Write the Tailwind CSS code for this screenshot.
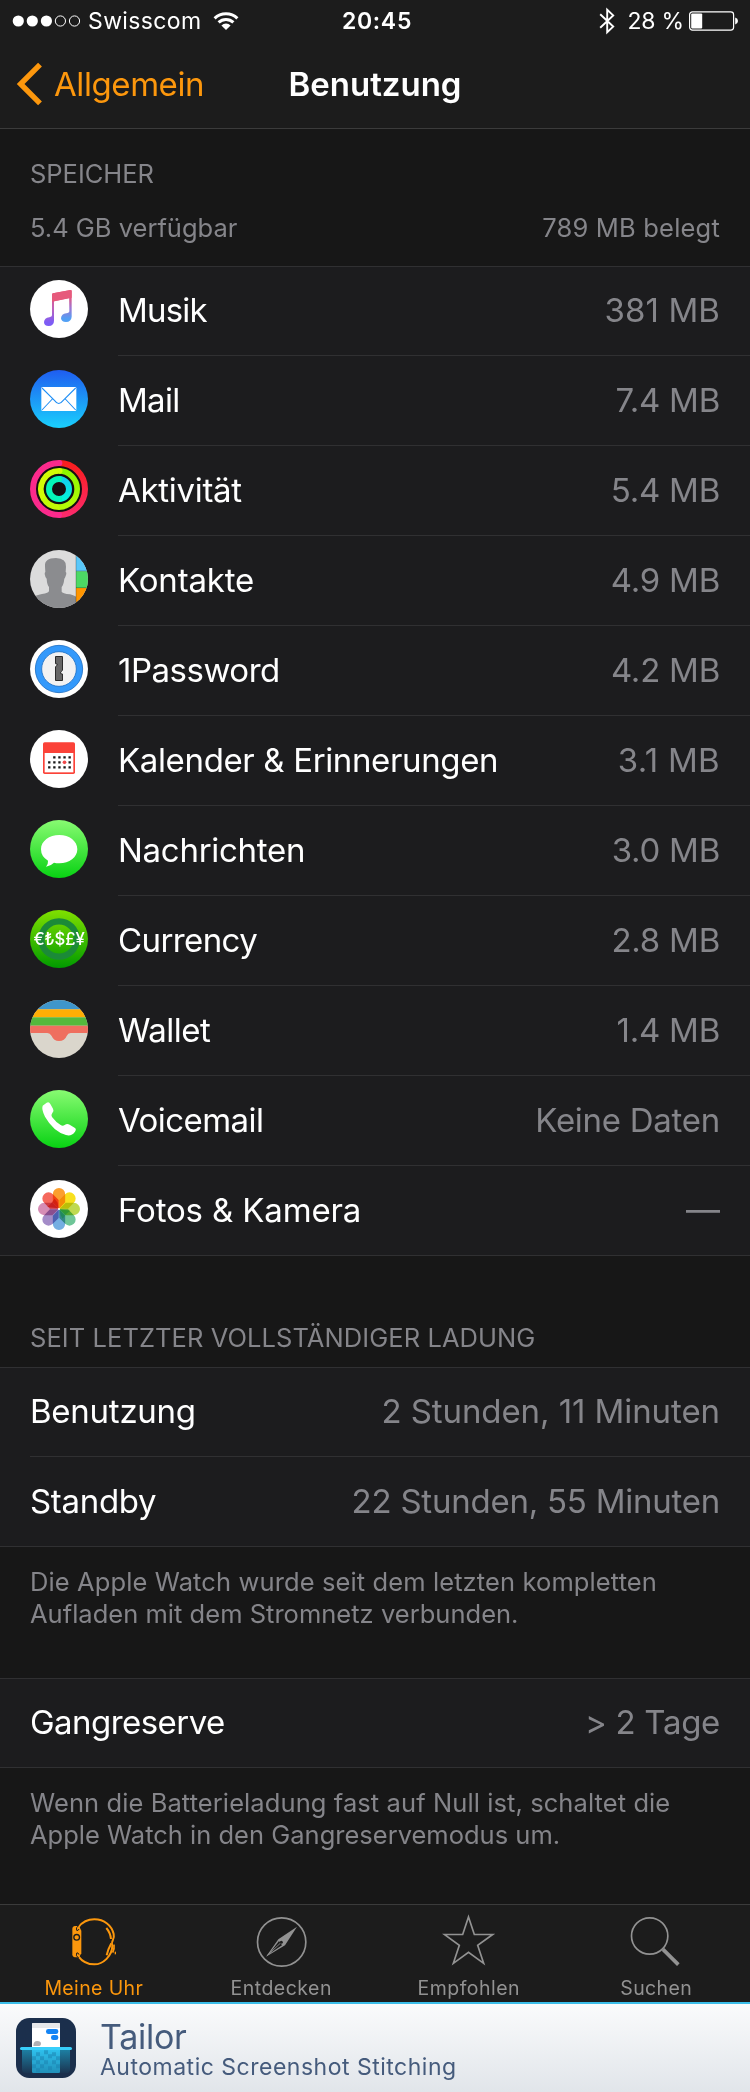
<!DOCTYPE html>
<html lang="de">
<head>
  <meta charset="UTF-8" />
  <meta name="viewport" content="width=device-width, initial-scale=1.0"/>
  <title>Benutzung</title>
  <script src="https://cdn.jsdelivr.net/npm/@tailwindcss/browser@4"></script>
</head>
<body class="w-[750px] h-[2092px] overflow-hidden bg-[#171717] text-white font-['Inter','Liberation_Sans',sans-serif] whitespace-nowrap">

  <!-- Header -->
  <header class="h-[129px] bg-[#1c1c1c] border-b border-[#3b3b3b]">
    <!-- Status bar -->
    <div class="grid grid-cols-[1fr_auto_1fr] h-[41px] items-center text-[23px] leading-[41px]">
      <div class="flex items-center pl-[12px]">
        <svg class="w-[70px] h-[14px]" viewBox="0 0 70 14">
          <g fill="#fff">
            <circle cx="6.3" cy="7" r="5.6"/><circle cx="20.3" cy="7" r="5.6"/><circle cx="34.4" cy="7" r="5.6"/>
          </g>
          <g fill="none" stroke="#fff" stroke-width="1">
            <circle cx="48.4" cy="7" r="5.1"/><circle cx="62.5" cy="7" r="5.1"/>
          </g>
        </svg>
        <span class="ml-[6px] pt-px tracking-[0.38px]">Swisscom</span>
        <svg class="ml-[11px] w-[26px] h-[20px]" viewBox="0 0 26 20">
          <g fill="none" stroke="#fff" stroke-width="3">
            <path d="M1.6 7.4A16.3 16.3 0 0 1 24.4 7.4"/>
            <path d="M5.6 11.4A10.6 10.6 0 0 1 20.4 11.4"/>
          </g>
          <path fill="#fff" d="M13 19L8.4 14.4A6.5 6.5 0 0 1 17.6 14.4Z"/>
        </svg>
      </div>
      <span class="font-semibold tracking-[0.71px] pl-[4px] pt-px">20:45</span>
      <div class="flex items-center justify-end pr-[11px]">
        <svg class="w-[17px] h-[28px]" viewBox="0 0 17 28">
          <path fill="none" stroke="#fff" stroke-width="1.9" d="M1.2 7.2L14.2 19.6L8.2 25.2V2.8L14.2 8.4L1.2 20.8"/>
        </svg>
        <span class="ml-[11px] pt-px tracking-[-0.2px]">28 %</span>
        <svg class="ml-[5px] w-[50px] h-[20px]" viewBox="0 0 50 20">
          <rect x="0.6" y="0.9" width="44" height="18.2" rx="2.8" fill="none" stroke="#fff" stroke-width="1.2"/>
          <rect x="2.2" y="2.6" width="11" height="14.8" rx="1" fill="#fff"/>
          <path fill="#fff" d="M46.2 6.6Q49 7.4 49 10Q49 12.6 46.2 13.4Z"/>
        </svg>
      </div>
    </div>
    <!-- Navigation bar -->
    <div class="grid grid-cols-[1fr_auto_1fr] items-center text-[33px] leading-[86px]">
      <a class="flex items-center pl-[16px] text-[#fc970d]">
        <svg class="w-[27px] h-[44px]" viewBox="0 0 27 44">
          <path fill="none" stroke="currentColor" stroke-width="5.4" d="M24 2.6L4.6 22L24 41.4"/>
        </svg>
        <span class="ml-[11px] tracking-[-0.42px]">Allgemein</span>
      </a>
      <h1 class="font-semibold">Benutzung</h1>
    </div>
  </header>

  <!-- Storage summary -->
  <div class="h-[137px] px-[30px] pt-[29px] text-[25.5px] text-[#85858a]">
    <h2 class="leading-8 tracking-[-0.03px]">SPEICHER</h2>
    <div class="flex justify-between mt-[22px] leading-8">
      <span>5.4 GB verfügbar</span>
      <span class="tracking-[0.2px]">789 MB belegt</span>
    </div>
  </div>

  <!-- Apps -->
  <ul class="bg-[#1c1c1e] text-[33px] leading-[88px]">
    <li class="flex h-[90px] pl-[30px] border-t border-[#303032] leading-[86px]">
      <svg class="w-[58px] h-[58px] mt-[13px]" viewBox="0 0 174 174">
        <defs>
          <linearGradient id="music" x1="0" y1="0" x2="0" y2="1">
            <stop offset="0.1" stop-color="#e9567a"/><stop offset="0.5" stop-color="#c062b8"/><stop offset="0.9" stop-color="#7d5cf5"/>
          </linearGradient>
          <linearGradient id="music2" x1="0" y1="0" x2="0" y2="1">
            <stop offset="0.2" stop-color="#e9567a"/><stop offset="0.55" stop-color="#a274d0"/><stop offset="0.9" stop-color="#52a0f5"/>
          </linearGradient>
        </defs>
        <circle cx="87" cy="87" r="87" fill="#fff"/>
        <path fill="url(#music)" d="M66 43Q66 40 69 39.5L118 30.5V54L72 64V122Q72 137 56 138Q42 138 42 126Q43 114 58 112Q66 111 66 106Z"/>
        <path fill="url(#music2)" d="M117 30.6L121 30Q125 29.5 125 33V110Q124 125 108 126Q94 126 93 115Q94 102 109 100Q118 99 118 93Z"/>
        <path fill="#e65a7c" d="M66 43Q66 40 69 39.5L121 30Q125 29.5 125 33V53L66 65Z"/>
      </svg>
      <div class="flex flex-1 justify-between ml-[30px] pr-[30px] border-b border-[#303032]">
        <span class="tracking-[-0.8px]">Musik</span><span class="text-[#85858a] tracking-[0.1px]">381 MB</span>
      </div>
    </li>
    <li class="flex h-[90px] pl-[30px]">
      <svg class="w-[58px] h-[58px] mt-[14px]" viewBox="0 0 174 174">
        <linearGradient id="mail" x1="0" y1="0" x2="0" y2="1">
          <stop offset="0" stop-color="#1f5df0"/><stop offset="1" stop-color="#1ad0fd"/>
        </linearGradient>
        <circle cx="87" cy="87" r="87" fill="url(#mail)"/>
        <rect x="34" y="51" width="105" height="72" rx="4" fill="#fff"/>
        <path fill="none" stroke="#1e8ef5" stroke-width="3.2" d="M36 54L74 92Q86 109 99 92L137 54M36 120L67 87M137 120L106 87"/>
      </svg>
      <div class="flex flex-1 justify-between ml-[30px] pr-[30px] border-b border-[#303032]">
        <span class="tracking-[-0.7px]">Mail</span><span class="text-[#85858a] tracking-[-0.24px]">7.4 MB</span>
      </div>
    </li>
    <li class="flex h-[90px] pl-[30px]">
      <svg class="w-[58px] h-[58px] mt-[14px]" viewBox="0 0 174 174">
        <defs>
          <linearGradient id="move" x1="0" y1="0" x2="0" y2="1"><stop offset="0" stop-color="#fa1e1e"/><stop offset="1" stop-color="#fb2a6a"/></linearGradient>
          <linearGradient id="exercise" x1="0" y1="0" x2="0" y2="1"><stop offset="0" stop-color="#8cf500"/><stop offset="1" stop-color="#b4fb08"/></linearGradient>
          <linearGradient id="stand" x1="0" y1="0" x2="0" y2="1"><stop offset="0" stop-color="#12cdf0"/><stop offset="1" stop-color="#04f2d8"/></linearGradient>
        </defs>
        <circle cx="87" cy="87" r="86" fill="#140f12"/>
        <g fill="none" stroke-width="18">
          <path stroke="url(#move)" d="M87 9A78 78 0 0 1 87 165"/>
          <path stroke="#fb2a8c" stroke-linecap="round" d="M88 9H87A78 78 0 0 0 87 165"/>
          <path stroke="url(#exercise)" stroke-width="17" d="M87 32.5A54.5 54.5 0 0 1 87 141.5"/>
          <path stroke="#d2fb06" stroke-width="17" stroke-linecap="round" d="M89 32.5H87A54.5 54.5 0 0 0 40 114"/>
          <path stroke="#c2fb06" stroke-width="17" d="M40 114A54.5 54.5 0 0 0 88 141.5"/>
          <path stroke="url(#stand)" d="M87 57A30 30 0 0 1 87 117"/>
          <path stroke="#04f5b8" stroke-linecap="round" d="M88 57H87A30 30 0 0 0 87 117"/>
        </g>
      </svg>
      <div class="flex flex-1 justify-between ml-[30px] pr-[30px] border-b border-[#303032]">
        <span class="tracking-[-0.3px]">Aktivität</span><span class="text-[#85858a] tracking-[-0.24px]">5.4 MB</span>
      </div>
    </li>
    <li class="flex h-[90px] pl-[30px]">
      <svg class="w-[58px] h-[58px] mt-[14px] rounded-full" viewBox="0 0 174 174">
        <rect width="174" height="174" fill="#dcdcdc"/>
        <path fill="#8b8c8f" d="M45 50Q42 24 78 24Q110 26 108 50L107 66Q111 68 107 78Q105 84 103 86Q101 104 95 111V125Q97 130 120 133Q136 137 140 142V174H10V142Q16 136 36 132Q56 129 57 123V111Q51 104 50 86Q46 84 44 72Q44 67 46 66Z"/>
        <path fill="#5ac8fa" d="M138 0H174V64H138Z"/>
        <path fill="#4cd964" d="M138 64H174V114H138Z"/>
        <path fill="#ff9500" d="M138 114H174V174H138Z"/>
        <path fill="none" stroke="#000" stroke-opacity="0.25" stroke-width="3" d="M138 0V174M138 63H174M138 113H174"/>
      </svg>
      <div class="flex flex-1 justify-between ml-[30px] pr-[30px] border-b border-[#303032]">
        <span class="tracking-[-0.17px]">Kontakte</span><span class="text-[#85858a] tracking-[-0.24px]">4.9 MB</span>
      </div>
    </li>
    <li class="flex h-[90px] pl-[30px]">
      <svg class="w-[58px] h-[58px] mt-[14px]" viewBox="0 0 174 174">
        <circle cx="87" cy="87" r="87" fill="#fff"/>
        <circle cx="87" cy="87" r="71" fill="#3399fb" stroke="#1d6fc4" stroke-width="2.5"/>
        <circle cx="87" cy="87" r="52" fill="#f2f2f2" stroke="#1d6fc4" stroke-width="2.5"/>
        <path fill="#666" stroke="#2b2b2b" stroke-width="3" d="M76.5 49.5H97.5V91L92 96V101L97.5 102V121.5H76.5V80L81.5 76V72L76.5 71Z"/>
      </svg>
      <div class="flex flex-1 justify-between ml-[30px] pr-[30px] border-b border-[#303032]">
        <span class="tracking-[-0.49px]">1Password</span><span class="text-[#85858a] tracking-[-0.24px]">4.2 MB</span>
      </div>
    </li>
    <li class="flex h-[90px] pl-[30px]">
      <svg class="w-[58px] h-[58px] mt-[14px]" viewBox="0 0 174 174">
        <circle cx="87" cy="87" r="87" fill="#fff"/>
        <rect x="39" y="37" width="96" height="95" rx="5" fill="#fb4238"/>
        <rect x="44" y="69" width="86" height="58" fill="#fff"/>
        <g stroke="#1a1a1a" stroke-width="7" stroke-dasharray="7 8.3">
          <path d="M69.5 82H126M54.3 97H126M54.3 112H126"/>
        </g>
        <rect x="97" y="91" width="13" height="12" fill="#fff"/>
        <circle cx="103.5" cy="97" r="5.5" fill="#f0484a"/>
      </svg>
      <div class="flex flex-1 justify-between ml-[30px] pr-[30px] border-b border-[#303032]">
        <span class="tracking-[-0.36px]">Kalender &amp; Erinnerungen</span><span class="text-[#85858a] tracking-[0.3px]">3.1 MB</span>
      </div>
    </li>
    <li class="flex h-[90px] pl-[30px]">
      <svg class="w-[58px] h-[58px] mt-[14px]" viewBox="0 0 174 174">
        <linearGradient id="green" x1="0" y1="0" x2="0" y2="1">
          <stop offset="0" stop-color="#88fb72"/><stop offset="1" stop-color="#08d213"/>
        </linearGradient>
        <circle cx="87" cy="87" r="87" fill="url(#green)"/>
        <path fill="#fff" d="M88 45C118 45 142 63 142 88C142 112 118 130 88 130Q78 130 72 128Q62 138 48 140Q55 132 54 122Q33 110 33 88C33 63 58 45 88 45Z"/>
      </svg>
      <div class="flex flex-1 justify-between ml-[30px] pr-[30px] border-b border-[#303032]">
        <span class="tracking-[-0.28px]">Nachrichten</span><span class="text-[#85858a] tracking-[-0.24px]">3.0 MB</span>
      </div>
    </li>
    <li class="flex h-[90px] pl-[30px]">
      <svg class="w-[58px] h-[58px] mt-[14px]" viewBox="0 0 174 174">
        <linearGradient id="currency" x1="0" y1="0" x2="0" y2="1">
          <stop offset="0" stop-color="#80e000"/><stop offset="1" stop-color="#009a00"/>
        </linearGradient>
        <circle cx="87" cy="87" r="87" fill="url(#currency)"/>
        <circle cx="87" cy="87" r="53" fill="none" stroke="#1b8a38" stroke-width="19"/>
        <text x="87" y="105" text-anchor="middle" fill="#fff" font-size="50" font-weight="500" letter-spacing="-0.37">€₺$£¥</text>
      </svg>
      <div class="flex flex-1 justify-between ml-[30px] pr-[30px] border-b border-[#303032]">
        <span class="tracking-[-0.6px]">Currency</span><span class="text-[#85858a] tracking-[-0.24px]">2.8 MB</span>
      </div>
    </li>
    <li class="flex h-[90px] pl-[30px]">
      <svg class="w-[58px] h-[58px] mt-[14px] rounded-full" viewBox="0 0 174 174">
        <rect width="174" height="174" fill="#dad6cc"/>
        <rect width="174" height="28" fill="#3f96cb"/>
        <rect y="28" width="174" height="24" fill="#ffae05"/>
        <rect y="52" width="174" height="25" fill="#55b93c"/>
        <path fill="#ef6f5f" d="M0 77H174V99H122Q114 99 110 108Q104 123 87 123Q71 123 65 108Q60 99 52 99H0Z"/>
      </svg>
      <div class="flex flex-1 justify-between ml-[30px] pr-[30px] border-b border-[#303032]">
        <span class="tracking-[-0.5px]">Wallet</span><span class="text-[#85858a] tracking-[-0.24px]">1.4 MB</span>
      </div>
    </li>
    <li class="flex h-[90px] pl-[30px]">
      <svg class="w-[58px] h-[58px] mt-[14px]" viewBox="0 0 174 174">
        <circle cx="87" cy="87" r="87" fill="url(#green)"/>
        <path fill="#fff" d="M38 47L50 38Q57 34 61 42L69 56Q73 63 67 69Q62 75 66 81Q78 97 92 105Q98 109 104 105Q111 100 119 104L135 114Q140 118 135 125Q124 140 108 135Q70 124 45 80Q34 58 38 47Z"/>
      </svg>
      <div class="flex flex-1 justify-between ml-[30px] pr-[30px] border-b border-[#303032]">
        <span class="tracking-[-0.55px]">Voicemail</span><span class="text-[#85858a] tracking-[-0.27px]">Keine Daten</span>
      </div>
    </li>
    <li class="flex h-[90px] pl-[30px] border-b border-[#303032]">
      <svg class="w-[58px] h-[58px] mt-[14px]" viewBox="0 0 174 174">
        <defs><path id="petal" d="M87 86L68.5 67V42.5A18.5 18.5 0 0 1 105.5 42.5V67Z"/></defs>
        <circle cx="87" cy="87" r="87" fill="#fff"/>
        <g class="isolate *:mix-blend-multiply">
          <use href="#petal" fill="#fb9f2e"/>
          <use href="#petal" fill="#f8e01e" transform="rotate(45 87 87)"/>
          <use href="#petal" fill="#bfd950" transform="rotate(90 87 87)"/>
          <use href="#petal" fill="#6fc698" transform="rotate(135 87 87)"/>
          <use href="#petal" fill="#74aee2" transform="rotate(180 87 87)"/>
          <use href="#petal" fill="#a48cc8" transform="rotate(225 87 87)"/>
          <use href="#petal" fill="#d68db5" transform="rotate(270 87 87)"/>
          <use href="#petal" fill="#f5685c" transform="rotate(315 87 87)"/>
        </g>
        <!-- Darker inner tips on the red and green sides -->
        <path fill="#c8140f" fill-opacity="0.7" d="M85 85L52 80L62 72L74 56L83 68Z"/>
        <path fill="#128a3c" fill-opacity="0.55" d="M89 88L120 92L108 103L98 116L92 106Z"/>
        <circle cx="87" cy="87" r="3" fill="#fff"/>
      </svg>
      <div class="flex flex-1 justify-between ml-[30px] pr-[30px]">
        <span class="tracking-[-0.15px]">Fotos &amp; Kamera</span><span class="text-[#85858a] text-[34px]">—</span>
      </div>
    </li>
  </ul>

  <!-- Since last charge -->
  <h2 class="h-[111px] px-[30px] pt-[66px] text-[25.5px] leading-8 tracking-[0.07px] text-[#85858a]">SEIT LETZTER VOLLSTÄNDIGER LADUNG</h2>
  <div class="bg-[#1c1c1e] border-y border-[#303032] pl-[30px] text-[33px]">
    <div class="flex justify-between h-[89px] pr-[30px] leading-[86px] border-b border-[#303032]">
      <span class="tracking-[-0.25px]">Benutzung</span><span class="text-[#85858a] tracking-[-0.08px]">2 Stunden, 11 Minuten</span>
    </div>
    <div class="flex justify-between h-[89px] pr-[30px] leading-[88px]">
      <span class="tracking-[-0.32px]">Standby</span><span class="text-[#85858a] tracking-[-0.24px]">22 Stunden, 55 Minuten</span>
    </div>
  </div>
  <p class="px-[30px] pt-[19px] pb-12 text-[25.5px] leading-8 text-[#85858a]">
    <span class="tracking-[0.11px]">Die Apple Watch wurde seit dem letzten kompletten</span><br>
    <span class="tracking-[0.02px]">Aufladen mit dem Stromnetz verbunden.</span>
  </p>

  <!-- Power reserve -->
  <div class="flex justify-between h-[90px] px-[30px] bg-[#1c1c1e] border-y border-[#303032] text-[33px] leading-[86px]">
    <span class="tracking-[-0.55px]">Gangreserve</span><span class="text-[#85858a] tracking-[-0.31px]">&gt; 2 Tage</span>
  </div>
  <p class="h-[136px] px-[30px] pt-[19px] text-[25.5px] leading-8 text-[#85858a]">
    <span class="tracking-[0.09px]">Wenn die Batterieladung fast auf Null ist, schaltet die</span><br>
    <span>Apple Watch in den Gangreservemodus um.</span>
  </p>

  <!-- Tab bar -->
  <nav class="grid grid-cols-4 h-[98px] pt-[9px] bg-[#1c1c1c] border-t border-[#3b3b3b] text-[19.5px] leading-5 text-[#929292]">
    <a class="flex flex-col items-center gap-[10px] text-[#fc970d]">
      <svg class="w-[54px] h-[54px]" viewBox="200 72 162 162" fill="none" stroke="currentColor" stroke-width="6">
        <path fill="currentColor" stroke="none" d="M216 117Q216 109 224 108H236L243 122V190L236 202H224Q216 201 216 193Z"/>
        <path d="M234 112Q252 88 282 88C312 88 334 106 340 132Q342 143 338 149Q333 157 336 166C336 198 308 223 282 223Q252 223 234 199"/>
        <path d="M235 107Q225 112 229 121Q233 124 236 117M235 204Q225 198 229 189Q233 186 236 194" stroke="#1c1c1c" stroke-width="3"/>
        <circle cx="229" cy="142" r="8.5" stroke="#1c1c1c" stroke-width="4"/>
        <path d="M318 114Q330 128 332 147M333 160Q323 178 319 196"/>
        <path stroke-width="5" d="M341 164Q343 176 337 188"/>
        <path stroke-width="4" d="M345 185V193"/>
      </svg>
      <span class="tracking-[0.36px]">Meine Uhr</span>
    </a>
    <a class="flex flex-col items-center gap-[10px]">
      <svg class="w-[54px] h-[54px]" viewBox="763 72 162 162">
        <circle cx="846" cy="156" r="72.5" fill="none" stroke="currentColor" stroke-width="5"/>
        <path fill="currentColor" fill-rule="evenodd" d="M892 110L856 166L799 200L836 148ZM838 153L809 191L847 166Z"/>
        <path stroke="currentColor" stroke-width="2.5" d="M846 156L802 197"/>
        <circle cx="845" cy="157" r="4.5" fill="#1c1c1c"/>
      </svg>
      <span class="tracking-[0.47px]">Entdecken</span>
    </a>
    <a class="flex flex-col items-center gap-[10px]">
      <svg class="w-[54px] h-[54px]" viewBox="201 72 162 162">
        <path fill="none" stroke="currentColor" stroke-width="5" d="M280.5 81L298 133.500H353L308 166L326 220L280.5 187L235 220L253 166L208 133.5H263Z"/>
      </svg>
      <span class="tracking-[0.49px]">Empfohlen</span>
    </a>
    <a class="flex flex-col items-center gap-[10px]">
      <svg class="w-[54px] h-[54px]" viewBox="763 72 162 162" fill="none" stroke="currentColor">
        <circle cx="825" cy="138" r="54.5" stroke-width="5"/>
        <path stroke-width="11" d="M865 178L911 224"/>
      </svg>
      <span class="tracking-[0.38px]">Suchen</span>
    </a>
  </nav>

  <!-- Tailor banner -->
  <footer class="flex h-[90px] pl-[16px] pt-[14px] border-t-2 border-[#3bbde8] bg-linear-to-b from-[#fafbfc] to-[#e1e5ea] text-[#455b7c]">
    <svg class="w-[60px] h-[60px]" viewBox="48 384 180 180">
      <linearGradient id="water" x1="0" y1="0" x2="0" y2="1">
        <stop offset="0" stop-color="#1d84a8"/><stop offset="1" stop-color="#1b3450"/>
      </linearGradient>
      <linearGradient id="page" x1="0" y1="0" x2="0" y2="1">
        <stop offset="0" stop-color="#2fc3f0"/><stop offset="1" stop-color="#2191ba"/>
      </linearGradient>
      <rect x="48" y="384" width="180" height="180" rx="40" fill="#1b2f4c"/>
      <path fill="url(#water)" d="M66 475H210V538Q210 550 198 550H78Q66 550 66 538Z"/>
      <path fill="#fff" d="M96 403Q96 399 100 399H176Q180 399 180 403V475H96Z"/>
      <path fill="#e6e8ea" d="M96 403Q96 399 100 399H176Q180 399 180 403V414H96Z"/>
      <rect x="138" y="417" width="37" height="15" rx="7" fill="#1484f5"/>
      <rect x="153" y="435" width="22" height="15" rx="7" fill="#1484f5"/>
      <path fill="#b0b0b4" d="M100 468Q100 453 112 453Q123 453 123 461Q123 468 114 468Z"/>
      <path fill="url(#page)" d="M96 475H180V545Q180 549 176 549H100Q96 549 96 545Z"/>
      <g fill="#1a7fae" fill-opacity="0.5">
        <path d="M108 487h12v12h-12zM132 481h12v12h-12zM156 487h12v12h-12zM96 499h12v12h-12zM120 499h12v12h-12zM144 493h12v12h-12zM168 499h12v12h-12zM108 511h12v12h-12zM132 511h12v12h-12zM156 511h12v12h-12zM96 523h12v12h-12zM120 523h12v12h-12zM168 523h12v12h-12zM144 529h12v12h-12zM108 535h12v12h-12z"/>
      </g>
      <rect x="60" y="471" width="156" height="9" rx="4.5" fill="#38cffb"/>
    </svg>
    <div class="ml-[24px]">
      <div class="text-[34px] leading-[38px] tracking-[-0.28px]">Tailor</div>
      <div class="text-[23px] leading-[22px] tracking-[0.5px]">Automatic Screenshot Stitching</div>
    </div>
  </footer>

</body>
</html>
